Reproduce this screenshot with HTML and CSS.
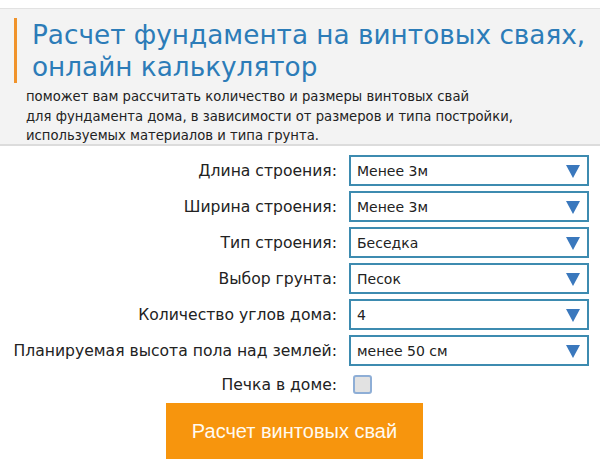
FILE: index.html
```html
<!DOCTYPE html>
<html lang="ru">
<head>
    <meta charset="UTF-8">
    <meta name="viewport" content="width=device-width, initial-scale=1.0">
    <title>Расчет фундамента на винтовых сваях</title>
    <link rel="stylesheet" href="styles.css">
</head>
<body>
    <div class="intro">
        <h1>Расчет фундамента на винтовых сваях, онлайн калькулятор</h1>
        <p>поможет вам рассчитать количество и размеры винтовых свай<br>
        для фундамента дома, в зависимости от размеров и типа постройки,<br>
        используемых материалов и типа грунта.</p>
    </div>

    <form class="calc" id="calcForm">
        <label for="length">Длина строения:</label>
        <div class="select-box">
            <select id="length" name="length">
                <option>Менее 3м</option>
                <option>3-6м</option>
                <option>Более 6м</option>
            </select>
            <span class="arrow"></span>
        </div>

        <label for="width">Ширина строения:</label>
        <div class="select-box">
            <select id="width" name="width">
                <option>Менее 3м</option>
                <option>3-6м</option>
                <option>Более 6м</option>
            </select>
            <span class="arrow"></span>
        </div>

        <label for="type">Тип строения:</label>
        <div class="select-box">
            <select id="type" name="type">
                <option>Беседка</option>
                <option>Баня</option>
                <option>Дом</option>
            </select>
            <span class="arrow"></span>
        </div>

        <label for="ground">Выбор грунта:</label>
        <div class="select-box">
            <select id="ground" name="ground">
                <option>Песок</option>
                <option>Глина</option>
                <option>Суглинок</option>
            </select>
            <span class="arrow"></span>
        </div>

        <label for="corners">Количество углов дома:</label>
        <div class="select-box">
            <select id="corners" name="corners">
                <option>4</option>
                <option>6</option>
                <option>8</option>
            </select>
            <span class="arrow"></span>
        </div>

        <label for="height">Планируемая высота пола над землей:</label>
        <div class="select-box">
            <select id="height" name="height">
                <option>менее 50 см</option>
                <option>50-100 см</option>
                <option>более 100 см</option>
            </select>
            <span class="arrow"></span>
        </div>

        <label for="stove">Печка в доме:</label>
        <div class="check-box">
            <input type="checkbox" id="stove" name="stove">
        </div>

        <button type="submit" class="calc-button">Расчет винтовых свай</button>
    </form>
</body>
</html>
```

FILE: styles.css
```css
body {
    margin: 0;
    font-family: "DejaVu Sans", Verdana, sans-serif;
    background-color: #ffffff;
    color: #222;
}
.intro {
    margin-top: 8px;
    height: 138px;
    box-sizing: border-box;
    padding: 9px 0 0 14px;
    border-top: 1px solid #e2e2e2;
    border-bottom: 2px solid #dcdcdc;
    background-color: #f3f3f3;
}
.intro > h1 {
    margin: 0;
    padding: 1px 0 0 15px;
    border-left: 3px solid #f0932b;
    font-size: 26.3px;
    font-weight: normal;
    line-height: 32px;
    color: #2c7cb8;
}
.intro > p {
    margin: 4px 0 0 12px;
    font-size: 13.2px;
    line-height: 19.5px;
    color: #222;
}
.calc {
    display: grid;
    grid-template-columns: 337px 240px;
    column-gap: 12px;
    row-gap: 5px;
    align-items: center;
    padding-top: 9px;
}
.calc > label {
    text-align: right;
    font-size: 15.6px;
    color: #222;
}
.select-box {
    position: relative;
    height: 31px;
}
.select-box select {
    width: 100%;
    height: 100%;
    padding: 0 30px 0 6px;
    box-sizing: border-box;
    border: 2px solid #3d8bb0;
    border-radius: 0;
    background-color: #ffffff;
    font-family: "DejaVu Sans", Verdana, sans-serif;
    font-size: 14px;
    color: #222;
    appearance: none;
    -webkit-appearance: none;
}
.select-box .arrow {
    position: absolute;
    top: 10px;
    right: 9px;
    width: 0;
    height: 0;
    border-left: 7px solid transparent;
    border-right: 7px solid transparent;
    border-top: 13px solid #3a78bd;
    pointer-events: none;
}
.check-box {
    height: 27px;
    display: flex;
    align-items: center;
    padding-left: 4px;
}
.check-box input {
    width: 19px;
    height: 19px;
    margin: 0;
    appearance: none;
    -webkit-appearance: none;
    border: 2px solid #8eaed6;
    border-radius: 3px;
    background-color: #e2e2e2;
}
.check-box input:checked {
    background-color: #3a78bd;
}
.calc-button {
    grid-column: 1 / 3;
    justify-self: start;
    margin-left: 166px;
    width: 257px;
    height: 56px;
    border: none;
    background-color: #f7950d;
    color: #fffaf0;
    font-family: "Liberation Sans", Arial, sans-serif;
    font-size: 20px;
    cursor: pointer;
}
.calc-button:hover {
    background-color: #e5850a;
}
```
